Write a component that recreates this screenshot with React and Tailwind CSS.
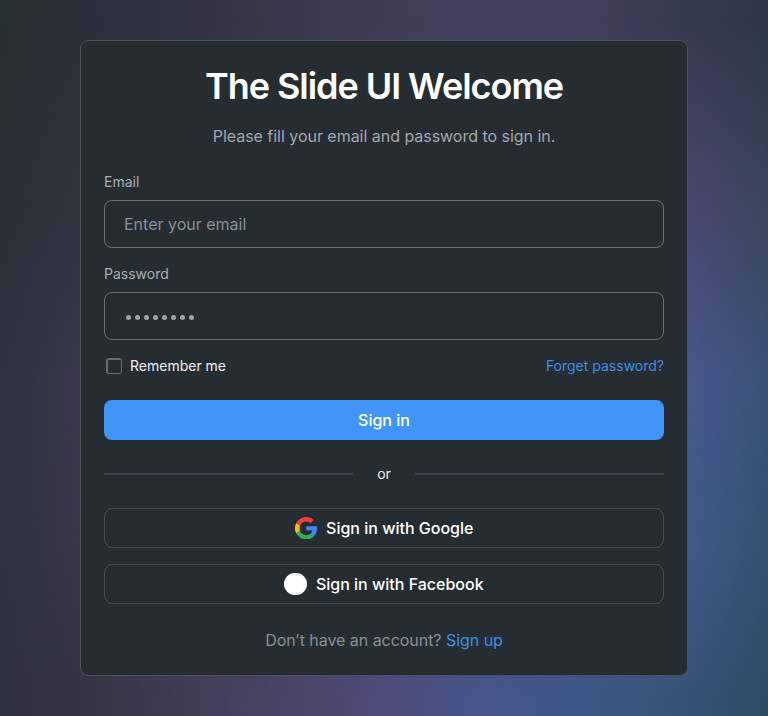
import React from "react";

function GoogleIcon() {
  return (
    <svg className="size-[22.5px] shrink-0" viewBox="2 2 44 44" aria-hidden="true">
      <path fill="#4285f4" d="M45.1 24.5c0-1.6-.1-3.1-.4-4.5H24v8.5h11.8c-.5 2.8-2.1 5.1-4.4 6.7v5.5h7.1c4.2-3.8 6.6-9.5 6.6-16.2z" />
      <path fill="#34a853" d="M24 46c5.9 0 10.9-2 14.5-5.3l-7.1-5.5c-2 1.3-4.5 2.1-7.4 2.1-5.7 0-10.5-3.9-12.3-9.1H4.3v5.7C8 41.1 15.4 46 24 46z" />
      <path fill="#fbbc05" d="M11.7 28.2A13.2 13.2 0 0 1 11.7 19.8v-5.7H4.3a22 22 0 0 0 0 19.8z" />
      <path fill="#ea4335" d="M24 10.7c3.2 0 6.1 1.1 8.4 3.3l6.3-6.3C34.9 4.2 29.900 2 24 2 15.4 2 8 6.9 4.3 14.1l7.4 5.7c1.8-5.2 6.6-9.1 12.3-9.1z" />
    </svg>
  );
}

function SocialButton({ icon, children }) {
  return (
    <button className="flex h-10 w-full items-center justify-center gap-[9px] rounded-lg border border-[#464e54] text-base font-medium text-white">
      {icon}
      <span>{children}</span>
    </button>
  );
}

/* Horizontal colour bands, each fading in over the one above it. */
function Aurora() {
  return (
    <>
      <div className="col-start-1 row-start-1 bg-[linear-gradient(90deg,#262f33_0%,#2b303a_14%,#343545_30%,#3f3c50_46%,#423f5b_60%,#403f59_78%,#353b4e_89%,#2e3648_100%)]" />
      <div className="col-start-1 row-start-1 bg-[linear-gradient(90deg,#292f36_0%,#2f343d_10%,#48456a_50%,#48466e_90%,#3a4559_100%)] mask-[linear-gradient(180deg,transparent_20px,black_200px)]" />
      <div className="col-start-1 row-start-1 bg-[linear-gradient(90deg,#2e333e_0%,#37394a_10%,#48456a_50%,#48588c_90%,#3b5179_100%)] mask-[linear-gradient(180deg,transparent_200px,black_380px)]" />
      <div className="col-start-1 row-start-1 bg-[linear-gradient(90deg,#2f333e_0%,#363748_10%,#4b4976_50%,#405a8a_90%,#335270_100%)] mask-[linear-gradient(180deg,transparent_380px,black_550px)]" />
      <div className="col-start-1 row-start-1 bg-[linear-gradient(90deg,#2d313b_0%,#343544_12%,#433f5a_28%,#4a4669_40%,#4d4b7a_49%,#48568a_63%,#3f5887_74%,#375379_88%,#2d4a65_100%)] mask-[linear-gradient(180deg,transparent_550px,black_700px)]" />
    </>
  );
}

export default function App() {
  return (
    <main className="grid h-[716px] w-[768px] bg-[#2e3340] font-['Inter',sans-serif]">
      <Aurora />
      <section className="z-10 col-start-1 row-start-1 mt-10 flex h-[636px] w-[608px] flex-col justify-self-center rounded-lg border border-[#4b515a] bg-[#252c32] px-[23px] pt-[23px]">
        <h1 className="text-center text-4xl leading-[44px] font-semibold tracking-[-1.05px] text-white">The Slide UI Welcome</h1>
        <p className="mt-4 text-center text-base leading-6 tracking-[-0.03px] text-[#a2a8ae]">Please fill your email and password to sign in.</p>
        <form className="mt-6 flex flex-col" onSubmit={(e) => e.preventDefault()}>
          <label htmlFor="email" className="text-sm leading-5 text-[#a9b0b6]">Email</label>
          <input id="email" type="email" placeholder="Enter your email" className="mt-2 h-12 rounded-lg border border-[#687078] px-[19px] text-base text-white placeholder:text-[#899198]" />
          <div className="mt-4 text-sm leading-5 text-[#a9b0b6]">Password</div>
          <div className="mt-2 flex h-12 items-center gap-1 rounded-lg border border-[#687078] px-[21px] pt-[2px]">
            {Array.from({ length: 8 }, (_, i) => (
              <span key={i} className="size-[5px] rounded-full bg-[#9da3a9]" />
            ))}
          </div>
          <div className="mt-4 flex h-5 items-center justify-between text-sm">
            <div className="flex items-center gap-2 pl-[2px] text-[#edf0f2]">
              <span className="flex size-4 items-center justify-center rounded-[3px] bg-[#646c74] p-[1.5px]">
                <span className="size-full rounded-[1px] bg-[#252c32]" />
              </span>
              Remember me
            </div>
            <a className="text-[#428fe5]">Forget password?</a>
          </div>
          <button className="mt-6 h-10 rounded-lg bg-[#4295f8] text-base font-medium text-white">Sign in</button>
        </form>
        <div className="mt-6 flex h-5 items-center gap-6 text-sm text-[#edf0f2]">
          <span className="h-[2px] flex-1 bg-[#3b4249]" />
          or
          <span className="h-[2px] flex-1 bg-[#3b4249]" />
        </div>
        <div className="mt-6 flex flex-col gap-4">
          <SocialButton icon={<GoogleIcon />}>Sign in with Google</SocialButton>
          <SocialButton icon={<span className="size-[22.5px] rounded-full bg-white" />}>Sign in with Facebook</SocialButton>
        </div>
        <p className="mt-6 text-center text-base leading-6 tracking-[-0.04px] text-[#899198]">
          Don’t have an account? <a className="text-[#428fe5]">Sign up</a>
        </p>
      </section>
    </main>
  );
}
